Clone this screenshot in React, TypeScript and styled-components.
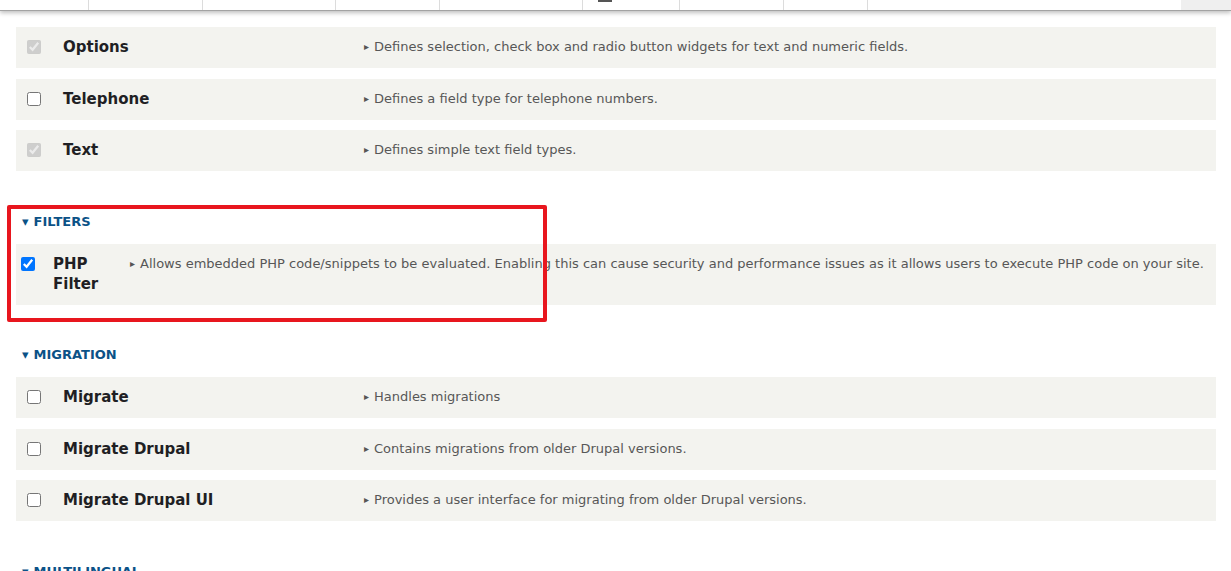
import styled, { createGlobalStyle } from "styled-components";

type Module = {
    name: string;
    desc: string;
    checked?: boolean;
    disabled?: boolean;
};

type Section = {
    title?: string;
    checkPad: number;
    checkCol: number;
    nameCol: number;
    modules: Module[];
    highlight?: boolean;
};

const sections: Section[] = [
    {
        checkPad: 11,
        checkCol: 47,
        nameCol: 301,
        modules: [
            { name: "Options", desc: "Defines selection, check box and radio button widgets for text and numeric fields.", checked: true, disabled: true },
            { name: "Telephone", desc: "Defines a field type for telephone numbers." },
            { name: "Text", desc: "Defines simple text field types.", checked: true, disabled: true },
        ],
    },
    {
        title: "Filters",
        checkPad: 5,
        checkCol: 37,
        nameCol: 77,
        highlight: true,
        modules: [
            { name: "PHP Filter", desc: "Allows embedded PHP code/snippets to be evaluated. Enabling this can cause security and performance issues as it allows users to execute PHP code on your site.", checked: true },
        ],
    },
    {
        title: "Migration",
        checkPad: 11,
        checkCol: 47,
        nameCol: 301,
        modules: [
            { name: "Migrate", desc: "Handles migrations" },
            { name: "Migrate Drupal", desc: "Contains migrations from older Drupal versions." },
            { name: "Migrate Drupal UI", desc: "Provides a user interface for migrating from older Drupal versions." },
        ],
    },
    {
        title: "Multilingual",
        checkPad: 11,
        checkCol: 47,
        nameCol: 301,
        modules: [],
    },
];

// widths of the header cells that peek out at the top
const headerCells = [89, 114, 133, 104, 143, 97, 104, 84, 313];

export default function App() {
    return (
        <>
            <GlobalStyle />
            <TopBar>
                <HeaderCells>
                    {headerCells.map((w, i) => (
                        <HeaderCell key={i} style={{ width: w }}>
                            {i === 5 && <HeaderIcon />}
                        </HeaderCell>
                    ))}
                </HeaderCells>
                <HeaderRest />
            </TopBar>
            <Page>
                {sections.map((s, si) => (
                    <Group key={si} first={!s.title}>
                        {s.highlight && <Highlight />}
                        {s.title && (
                            <GroupTitle>
                                <Caret>▾</Caret>
                                {s.title}
                            </GroupTitle>
                        )}
                        <Rows>
                            {s.modules.map((m) => (
                                <Row key={m.name} checkCol={s.checkCol} nameCol={s.nameCol}>
                                    <CheckCell pad={s.checkPad}>
                                        <Check type="checkbox" checked={!!m.checked} disabled={m.disabled} readOnly />
                                    </CheckCell>
                                    <Name>{m.name}</Name>
                                    <Desc>
                                        <Arrow>▸</Arrow>
                                        {m.desc}
                                    </Desc>
                                </Row>
                            ))}
                        </Rows>
                    </Group>
                ))}
            </Page>
        </>
    );
}

const GlobalStyle = createGlobalStyle`
    body {
        margin: 0;
        background: #fff;
        font-family: "DejaVu Sans", "Noto Sans", sans-serif;
        color: #222330;
        overflow: hidden;
    }
`

const TopBar = styled.div`
    position: relative;
    z-index: 2;
    display: flex;
    height: 10px;
    border-bottom: 1px solid #a3a3a3;
    box-shadow: 0 2px 4px rgba(0, 0, 0, 0.25);
`

const HeaderCells = styled.div`
    display: flex;
    width: 1181px;
    background: #fff;
`

const HeaderCell = styled.div`
    position: relative;
    box-sizing: border-box;
    height: 100%;
    border-right: 1px solid #dcdcdc;
    &:last-child {
        border-right: none;
    }
`

const HeaderIcon = styled.span`
    position: absolute;
    left: 15px;
    top: 0;
    width: 14px;
    height: 2px;
    background: #555;
`

const HeaderRest = styled.div`
    flex: 1;
    background: #efefef;
`

const Page = styled.div`
    padding: 16px 15px 0 16px;
`

const Group = styled.section<{ first?: boolean }>`
    position: relative;
    margin-top: ${(p) => (p.first ? "0" : "39px")};
`

const Highlight = styled.div`
    position: absolute;
    left: -9px;
    top: -5px;
    width: 540px;
    height: 117px;
    box-sizing: border-box;
    border: 4px solid #e8161e;
    border-radius: 2px;
    pointer-events: none;
    z-index: 1;
`

const GroupTitle = styled.h3`
    display: flex;
    align-items: center;
    margin: 0 0 11.5px 6px;
    height: 22px;
    font-size: 13px;
    font-weight: 700;
    text-transform: uppercase;
    color: #0b5287;
`

const Caret = styled.span`
    font-size: 13px;
    line-height: 1;
    margin-right: 5px;
`

const Rows = styled.div`
    display: flex;
    flex-direction: column;
    gap: 10.5px;
`

const Row = styled.div<{ checkCol: number; nameCol: number }>`
    display: grid;
    grid-template-columns: ${(p) => `${p.checkCol}px ${p.nameCol}px 1fr`};
    align-items: start;
    padding: 10px 8px 11px 0;
    background: #f3f3ef;
    line-height: 20px;
`

const CheckCell = styled.div<{ pad: number }>`
    display: flex;
    align-items: center;
    height: 20px;
    padding-left: ${(p) => p.pad}px;
`

const Check = styled.input`
    width: 14px;
    height: 14px;
    margin: 0;
`

const Name = styled.div`
    font-size: 15px;
    font-weight: 700;
    color: #1f1f24;
`

const Desc = styled.div`
    font-size: 13px;
    color: #575757;
`

const Arrow = styled.span`
    display: inline-block;
    font-size: 10px;
    line-height: 20px;
    vertical-align: top;
    margin-right: 5px;
    color: #555;
`
